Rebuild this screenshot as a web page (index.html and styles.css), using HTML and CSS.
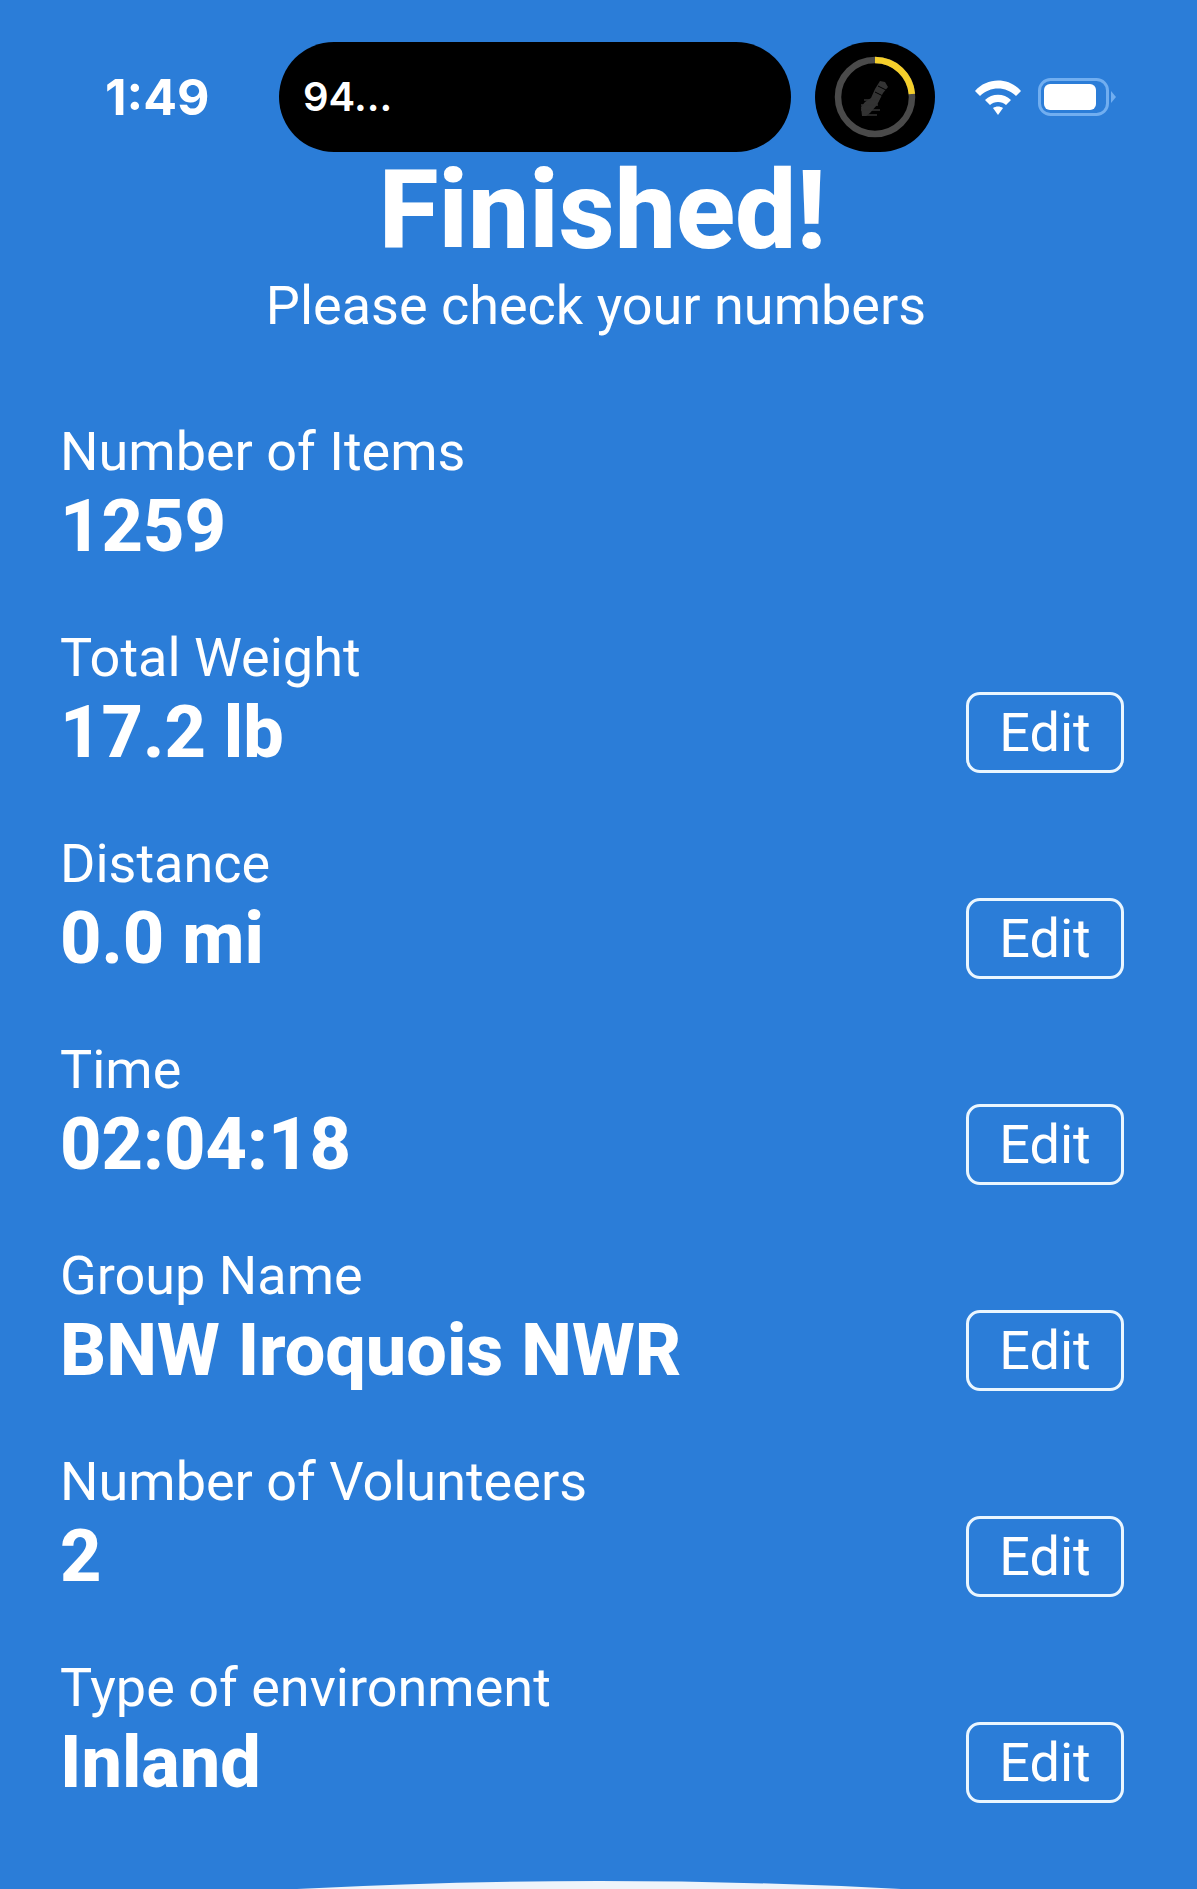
FILE: index.html
```html
<!DOCTYPE html>
<html lang="en">

<head>
    <meta charset="UTF-8" />
    <meta name="viewport" content="width=device-width, initial-scale=1.0" />
    <title>Finished</title>
    <link rel="stylesheet" href="styles.css">
</head>

<body>
    <main>
        <header class="status_bar">
            <div class="status_time">1:49</div>
            <div class="island">94...</div>
            <div class="island_ring">
                <svg width="120" height="110" viewBox="0 0 120 110">
                    <circle cx="60" cy="55" r="37" fill="none" stroke="#4a4a4a" stroke-width="6.5" />
                    <path d="M60 18A37 37 0 0 1 96.9 52" fill="none" stroke="#f5cf2b" stroke-width="6.5" />
                    <path d="M47 74l-1-9 4-5 6-4 4-9 5-8 5 1 3 5-5 6-6 12-7 8-4 3z" fill="#333" />
                    <path d="M48 73h14M46 68h19M46 63h17M49 58h14" stroke="#333" stroke-width="1.5" />
                    <path d="M60 50l8 4M63 44l8 4" stroke="#000" stroke-width="1" />
                </svg>
            </div>
            <svg class="wifi_icon" width="48" height="36" viewBox="0 0 48 36">
                <path d="M1 12C13 -2 35 -2 47 12l-5 5C32 7 16 7 6 17z" fill="#fff" />
                <path d="M11 21c7-7 19-7 26 0l-5 5c-4-4-12-4-16 0z" fill="#fff" />
                <path d="M19 29c3-2 7-2 10 0l-5 7z" fill="#fff" />
            </svg>
            <svg class="battery_icon" width="80" height="38" viewBox="0 0 80 38">
                <rect x="1.5" y="1.5" width="68" height="35" rx="11" fill="none" stroke="#71aef0" stroke-width="3" />
                <rect x="6" y="6" width="52" height="26" rx="6" fill="#fff" />
                <path d="M73 13l5 6-5 6z" fill="#71aef0" />
            </svg>
        </header>

        <section class="title_wrap">
            <h1 class="title">Finished!</h1>
            <p class="subtitle">Please check your numbers</p>
        </section>

        <ul class="stat_list">
            <li class="stat">
                <div class="stat_text">
                    <div class="stat_label">Number of Items</div>
                    <div class="stat_value">1259</div>
                </div>
            </li>
            <li class="stat">
                <div class="stat_text">
                    <div class="stat_label">Total Weight</div>
                    <div class="stat_value">17.2 lb</div>
                </div>
                <button class="edit_btn">Edit</button>
            </li>
            <li class="stat">
                <div class="stat_text">
                    <div class="stat_label">Distance</div>
                    <div class="stat_value">0.0 mi</div>
                </div>
                <button class="edit_btn">Edit</button>
            </li>
            <li class="stat">
                <div class="stat_text">
                    <div class="stat_label">Time</div>
                    <div class="stat_value">02:04:18</div>
                </div>
                <button class="edit_btn">Edit</button>
            </li>
            <li class="stat">
                <div class="stat_text">
                    <div class="stat_label">Group Name</div>
                    <div class="stat_value">BNW Iroquois NWR</div>
                </div>
                <button class="edit_btn">Edit</button>
            </li>
            <li class="stat">
                <div class="stat_text">
                    <div class="stat_label">Number of Volunteers</div>
                    <div class="stat_value">2</div>
                </div>
                <button class="edit_btn">Edit</button>
            </li>
            <li class="stat">
                <div class="stat_text">
                    <div class="stat_label">Type of environment</div>
                    <div class="stat_value">Inland</div>
                </div>
                <button class="edit_btn">Edit</button>
            </li>
        </ul>

        <svg class="sheet_edge" width="604" height="8" viewBox="0 0 604 8">
            <path d="M0 8Q302 -8 604 8z" fill="#eef4fa" />
        </svg>
    </main>
</body>

</html>
```

FILE: styles.css
```css
html,
body {
    height: 100%;
    padding: 0;
    margin: 0;
}

ul,
li {
    list-style: none;
    padding: 0;
    margin: 0;
}

main {
    height: 1889px;
    overflow: hidden;
    background: #2b7dd8;
    color: #fff;
    font-family: Roboto, "Liberation Sans", sans-serif;
    display: flex;
    flex-direction: column;
}

/* status bar */
.status_bar {
    height: 110px;
    padding: 42px 0 0 105px;
    display: flex;
    align-items: center;
    flex-shrink: 0;
}

.status_time {
    width: 174px;
    font: 700 50px Inter, "Liberation Sans", sans-serif;
}

.island {
    width: 512px;
    height: 110px;
    box-sizing: border-box;
    padding-left: 24px;
    border-radius: 55px;
    background: #000;
    font: 600 40px/110px Inter, "Liberation Sans", sans-serif;
}

.island_ring {
    width: 120px;
    height: 110px;
    margin-left: 24px;
    border-radius: 55px;
    background: #000;
}

.island_ring svg {
    display: block;
}

.wifi_icon {
    margin-left: 39px;
}

.battery_icon {
    margin-left: 16px;
}

/* title */
.title_wrap {
    text-align: center;
}

.title {
    margin: 0;
    padding-left: 8px;
    font-size: 109px;
    line-height: 118px;
    font-weight: 800;
}

.subtitle {
    margin: 0;
    padding-right: 5px;
    font-size: 54px;
    line-height: 72px;
    font-weight: 400;
}

/* rows */
.stat_list {
    margin-top: 79px;
    padding: 0 73px 0 60px;
    display: flex;
    flex-direction: column;
    gap: 60px;
}

.stat {
    height: 146px;
    display: flex;
    justify-content: space-between;
    align-items: flex-end;
}

.stat_text {
    align-self: flex-start;
}

.stat_label {
    font-size: 54px;
    line-height: 62px;
}

.stat_value {
    font-size: 72px;
    font-weight: 800;
    line-height: 87px;
}

.edit_btn {
    width: 158px;
    height: 81px;
    padding: 0;
    border: 3px solid #eaf6ff;
    border-radius: 14px;
    background: transparent;
    color: #fff;
    font-family: Roboto, "Liberation Sans", sans-serif;
    font-size: 54px;
}

.sheet_edge {
    display: block;
    flex-shrink: 0;
    margin: auto auto 0;
}
```
